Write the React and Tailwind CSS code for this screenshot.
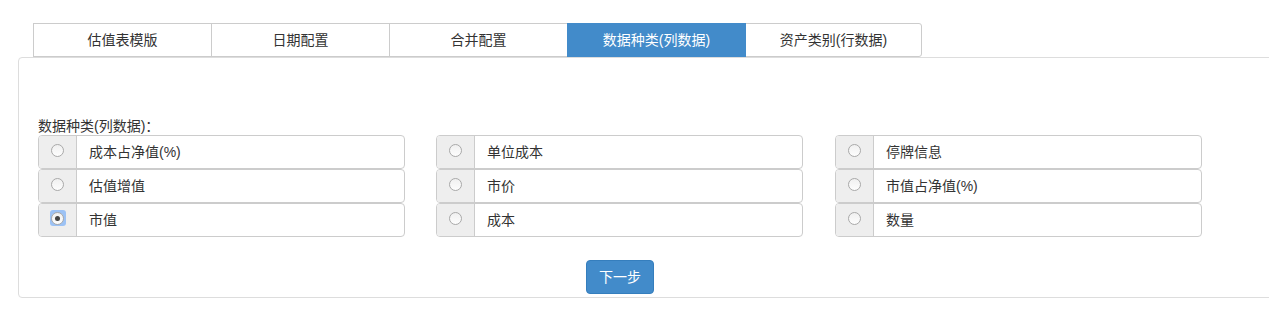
import { useState } from 'react'

const tabs = ['估值表模版', '日期配置', '合并配置', '数据种类(列数据)', '资产类别(行数据)']

const columns = [
  ['成本占净值(%)', '估值增值', '市值'],
  ['单位成本', '市价', '成本'],
  ['停牌信息', '市值占净值(%)', '数量'],
]

const Radio = ({ checked }) => (
  <span
    className={`flex items-center justify-center w-[16px] h-[16px] rounded-[3px] ${
      checked ? 'bg-[#9cc2f5]' : ''
    }`}
  >
    <span className="flex items-center justify-center w-[13px] h-[13px] rounded-full border border-[#a9a9a9] bg-gradient-to-b from-[#f0f0f0] to-[#fdfdfd]">
      {checked && <span className="w-[5px] h-[5px] rounded-full bg-[#444]" />}
    </span>
  </span>
)

const App = () => {
  const [active] = useState(3)
  const [selected, setSelected] = useState('市值')

  return (
    <div
      className="w-[1269px] h-[331px] overflow-hidden bg-white pt-[23px] text-[14px] text-[#333]"
      style={{ fontFamily: '"Liberation Sans", "Noto Sans CJK SC", sans-serif' }}
    >
      {/* Tabs */}
      <div className="flex ml-[33px]">
        {tabs.map((t, i) => (
          <div
            key={t}
            className={`h-[34px] flex items-center justify-center border ${
              i > 0 ? '-ml-px w-[179px]' : 'w-[179px]'
            } ${
              i === active
                ? 'bg-[#428bca] border-[#428bca] text-white relative'
                : 'bg-white border-[#ccc]'
            } ${i === tabs.length - 1 ? 'rounded-r-[3px] !w-[177px]' : ''}`}
          >
            {t}
          </div>
        ))}
      </div>

      {/* Panel */}
      <div className="ml-[18px] w-[1270px] h-[241px] border border-[#ddd] rounded-[4px] pt-[59px] pl-[19px]">
        <div className="leading-[17px]">
          数据种类(列数据)
          <span style={{ fontFamily: '"Noto Sans CJK SC", sans-serif' }}>：</span>
        </div>
        <div className="flex">
          {columns.map((col, ci) => (
            <div
              key={ci}
              className={`flex flex-col w-[367px] ${ci === 1 ? 'ml-[31px]' : ''} ${ci === 2 ? 'ml-[32px]' : ''}`}
            >
              {col.map(o => (
                <div
                  key={o}
                  onClick={() => setSelected(o)}
                  className="flex h-[34px] border border-[#ccc] rounded-[4px] overflow-hidden cursor-pointer"
                >
                  <div className="w-[38px] shrink-0 bg-[#eee] border-r border-[#ccc] flex items-start justify-center pt-[6px]">
                    <Radio checked={selected === o} />
                  </div>
                  <div className="flex items-center pl-[12px]">{o}</div>
                </div>
              ))}
            </div>
          ))}
        </div>
        <div className="w-[1164px] flex justify-center mt-[23px]">
          <button className="w-[68px] h-[34px] bg-[#428bca] border border-[#357ebd] rounded-[4px] text-white text-[14px]">
            下一步
          </button>
        </div>
      </div>
    </div>
  )
}

export default App
